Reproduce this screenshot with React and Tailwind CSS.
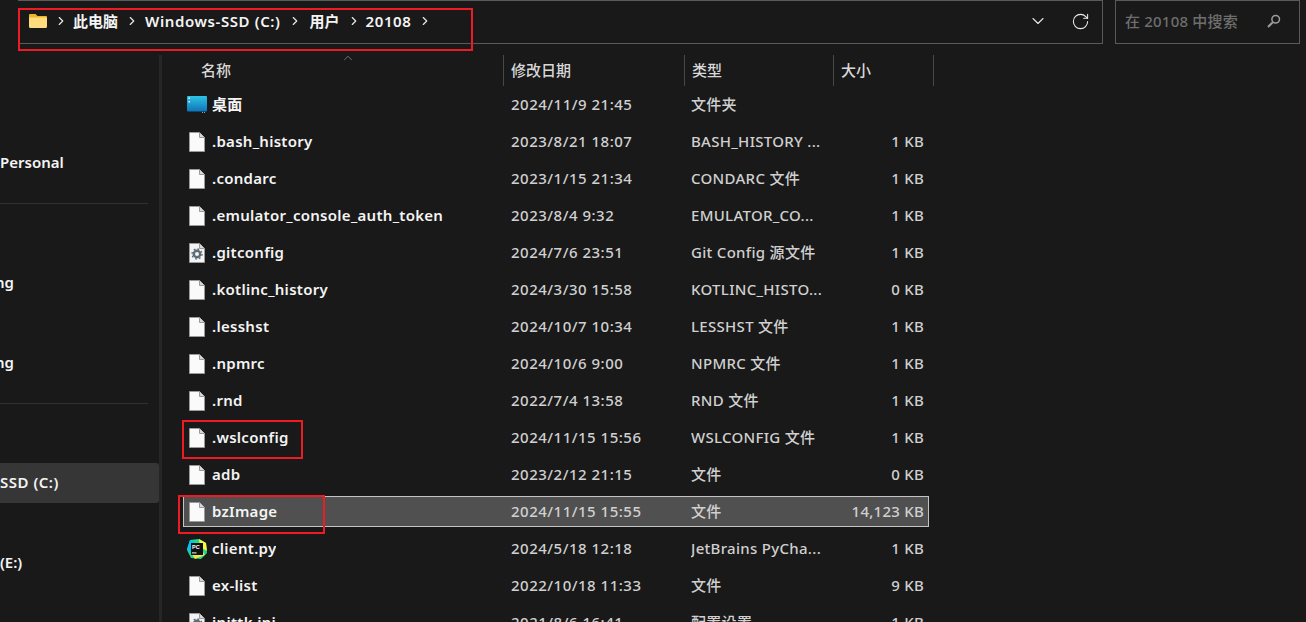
import React from "react";
import { ChevronRight, ChevronDown, ChevronUp, RotateCw } from "lucide-react";

const font = "font-['Noto_Sans','Noto_Sans_CJK_SC',sans-serif]";

const files = [
  { name: "桌面", date: "2024/11/9 21:45", type: "文件夹", size: "", icon: "desktop" },
  { name: ".bash_history", date: "2023/8/21 18:07", type: "BASH_HISTORY ...", size: "1 KB" },
  { name: ".condarc", date: "2023/1/15 21:34", type: "CONDARC 文件", size: "1 KB" },
  { name: ".emulator_console_auth_token", date: "2023/8/4 9:32", type: "EMULATOR_CO...", size: "1 KB" },
  { name: ".gitconfig", date: "2024/7/6 23:51", type: "Git Config 源文件", size: "1 KB", icon: "config" },
  { name: ".kotlinc_history", date: "2024/3/30 15:58", type: "KOTLINC_HISTO...", size: "0 KB" },
  { name: ".lesshst", date: "2024/10/7 10:34", type: "LESSHST 文件", size: "1 KB" },
  { name: ".npmrc", date: "2024/10/6 9:00", type: "NPMRC 文件", size: "1 KB" },
  { name: ".rnd", date: "2022/7/4 13:58", type: "RND 文件", size: "1 KB" },
  { name: ".wslconfig", date: "2024/11/15 15:56", type: "WSLCONFIG 文件", size: "1 KB" },
  { name: "adb", date: "2023/2/12 21:15", type: "文件", size: "0 KB" },
  { name: "bzImage", date: "2024/11/15 15:55", type: "文件", size: "14,123 KB", selected: true },
  { name: "client.py", date: "2024/5/18 12:18", type: "JetBrains PyCha...", size: "1 KB", icon: "pycharm" },
  { name: "ex-list", date: "2022/10/18 11:33", type: "文件", size: "9 KB" },
  { name: "inittk.ini", date: "2021/8/6 16:41", type: "配置设置", size: "1 KB", icon: "config" },
];

function FileIcon() {
  return (
    <svg width="16" height="20" viewBox="0 0 16 20">
      <path d="M0.5 0.5H10.5L15.5 5.5V19.5H0.5Z" fill="#fafafa" stroke="#9a9a9a" />
      <path d="M10.5 0.5V5.5H15.5" fill="#d8d8d8" stroke="#9a9a9a" />
    </svg>
  );
}

function ConfigIcon() {
  return (
    <svg width="16" height="20" viewBox="0 0 16 20">
      <path d="M0.5 0.5H10.5L15.5 5.5V19.5H0.5Z" fill="#f4f4f4" stroke="#9a9a9a" />
      <path d="M10.5 0.5V5.5H15.5" fill="#d8d8d8" stroke="#9a9a9a" />
      <circle cx="8" cy="11" r="3.2" fill="none" stroke="#5f6b75" strokeWidth="2.4" />
      <circle cx="8" cy="11" r="5" fill="none" stroke="#5f6b75" strokeWidth="1.4" strokeDasharray="1.8 2.1" />
    </svg>
  );
}

function DesktopIcon() {
  return (
    <svg width="20" height="17" viewBox="0 0 20 17">
      <defs>
        <linearGradient id="desk" x1="0" y1="0" x2="0" y2="1">
          <stop offset="0" stopColor="#2cc4e4" />
          <stop offset="1" stopColor="#0f73b8" />
        </linearGradient>
      </defs>
      <rect x="0" y="0" width="20" height="15.5" rx="1" fill="url(#desk)" />
      <rect x="1.5" y="1.5" width="1.5" height="1.5" fill="#e8f8ff" />
      <rect x="1.5" y="5" width="1.5" height="1.5" fill="#e8f8ff" />
      <rect x="15" y="16" width="1" height="1" fill="#8ab" />
      <rect x="17" y="16" width="1" height="1" fill="#8ab" />
    </svg>
  );
}

function PycharmIcon() {
  return (
    <svg width="20" height="20" viewBox="0 0 20 20">
      <path d="M3 1L12 0L19 4L20 14L14 20L4 19L0 11Z" fill="#21d789" />
      <path d="M12 0L19 4L20 12L13 8Z" fill="#fcf84a" />
      <path d="M8 20L18 16L14 10L4 14Z" fill="#f5e642" />
      <path d="M0 10L3 1L8 3L4 14Z" fill="#07c3f2" />
      <rect x="4" y="4" width="12" height="12" fill="#111" />
      <text x="5" y="9.6" fontSize="5.5" fontWeight="700" fill="#fff" fontFamily="Liberation Sans">PC</text>
      <rect x="5" y="13.4" width="4.5" height="1" fill="#fff" />
    </svg>
  );
}

function FolderIcon() {
  return (
    <svg width="18" height="14" viewBox="0 0 18 14">
      <path d="M0 1.2C0 .5.5 0 1.2 0H6.5L8.5 2H16.8C17.5 2 18 2.5 18 3.2V4H0Z" fill="#f0b429" />
      <path d="M0 3.4H18V12.8C18 13.5 17.5 14 16.8 14H1.2C.5 14 0 13.5 0 12.8Z" fill="#ffdc7d" />
    </svg>
  );
}

function SearchIcon() {
  return (
    <svg width="14" height="14" viewBox="0 0 14 14" fill="none" stroke="#9c9c9c">
      <circle cx="8.7" cy="5.3" r="3.8" strokeWidth="1.5" />
      <path d="M5.8 8.2L1 13" strokeWidth="2" />
    </svg>
  );
}

function RowIcon({ icon }) {
  if (icon === "desktop") return <DesktopIcon />;
  if (icon === "config") return <ConfigIcon />;
  if (icon === "pycharm") return <PycharmIcon />;
  return <FileIcon />;
}

function Crumb({ children, className = "" }) {
  return (
    <>
      <span className={`text-[15px] font-semibold text-[#f4f4f4] ${className}`}>{children}</span>
      <ChevronRight size={14} strokeWidth={2} className="ml-[7px] mr-[6px] text-[#e8e8e8]" />
    </>
  );
}

function Sidebar() {
  return (
    <div className="relative flex h-full w-[159px] shrink-0 flex-col overflow-hidden pt-[143px] text-[15px] font-semibold text-[#f4f4f4]">
      <div className="flex h-10 items-center pb-[2px]">Personal</div>
      <div className="mt-5 h-px w-[148px] bg-[#303030]" />
      <div className="mt-[59px] flex h-10 items-center justify-start pb-[2px]">
        <span className="-ml-[5px]">ng</span>
      </div>
      <div className="mt-10 flex h-10 items-center pb-[2px]">
        <span className="-ml-[5px]">ng</span>
      </div>
      <div className="mt-5 h-px w-[148px] bg-[#303030]" />
      <div className="mt-[59px] flex h-10 items-center rounded-r-[3px] bg-[#363636] pb-[2px] tracking-[0.5px]">SSD (C:)</div>
      <div className="mt-10 flex h-10 items-center pb-[2px]">(E:)</div>
    </div>
  );
}

function FileRow({ file }) {
  const rowClass = file.selected
    ? "border border-[#c4c4c4] bg-[#505050]"
    : "border border-transparent";
  return (
    <div className={`flex h-[31px] shrink-0 items-center text-[15px] font-semibold ${rowClass}`}>
      <div className="flex w-[327px] shrink-0 items-center">
        <div className="flex w-[28px] shrink-0 justify-center pr-[2px]">
          <RowIcon icon={file.icon} />
        </div>
        <span className="truncate tracking-[0.28px] text-[#f4f4f4]">{file.name}</span>
      </div>
      <span className="w-[180px] shrink-0 font-medium tracking-[0.5px] text-[#d0d0d0]">{file.date}</span>
      <span className="w-[142px] shrink-0 truncate font-medium tracking-[0.3px] text-[#d0d0d0]">{file.type}</span>
      <span className="flex-1 pr-[4px] text-right font-medium tracking-[0.25px] text-[#d0d0d0]">{file.size}</span>
    </div>
  );
}

function FileList() {
  return (
    <div className="flex h-full flex-1 flex-col overflow-hidden border-l-[3px] border-[#262626] pl-[21px]">
      <div className="relative flex h-[31px] w-[771px] shrink-0 items-center text-[15px] font-medium text-[#d8d8d8]">
        <div className="flex h-full w-[321px] shrink-0 items-center justify-between border-r border-[#484848] pl-[18px]">
          <span>名称</span>
          <ChevronUp size={14} strokeWidth={1} className="absolute left-[158px] -top-[4px] text-[#aaaaaa]" />
        </div>
        <div className="flex h-full w-[181px] shrink-0 items-center border-r border-[#484848] pl-[7px]">修改日期</div>
        <div className="flex h-full w-[149px] shrink-0 items-center border-r border-[#484848] pl-[7px]">类型</div>
        <div className="flex h-full w-[100px] shrink-0 items-center border-r border-[#484848] pl-[7px]">大小</div>
      </div>
      <div className="mt-[3px] flex w-[746px] flex-col gap-[6px]">
        {files.map((file) => (
          <FileRow key={file.name} file={file} />
        ))}
      </div>
    </div>
  );
}

export default function App() {
  return (
    <div className={`relative flex h-[622px] w-[1306px] flex-col overflow-hidden bg-[#191919] ${font}`}>
      <div className="flex h-[44px] shrink-0 pl-[18px] pr-[6px]">
        <div className="flex h-full w-[1085px] items-center border-r border-b border-t border-[#5a5a5a] pb-[2px] pl-[11px]">
          <FolderIcon />
          <ChevronRight size={14} strokeWidth={2} className="ml-[7px] mr-[5px] text-[#e8e8e8]" />
          <Crumb>此电脑</Crumb>
          <Crumb className="tracking-[0.6px]">Windows-SSD (C:)</Crumb>
          <Crumb className="ml-[2px]">用户</Crumb>
          <Crumb className="-ml-[1px] tracking-[0.6px]">20108</Crumb>
          <div className="ml-auto flex items-center">
            <ChevronDown size={20} strokeWidth={1.3} className="mr-[23px] text-[#e6e6e6]" />
            <RotateCw size={19} strokeWidth={1.3} className="mr-[12px] text-[#eeeeee]" />
          </div>
        </div>
        <div className="ml-[12px] flex h-full flex-1 items-center justify-between border border-[#5a5a5a] pb-[2px] pl-[9px] pr-[18px] text-[15px] font-medium tracking-[0.2px] text-[#6e6e6e]">
          <span>在 20108 中搜索</span>
          <SearchIcon />
        </div>
      </div>
      <div className="flex min-h-0 flex-1 pt-[11px]">
        <div className="-mt-[55px] h-[622px]">
          <Sidebar />
        </div>
        <FileList />
      </div>

      {/* red annotation boxes drawn over the screenshot */}
      <div className="absolute left-[18px] top-[8px] h-[43px] w-[455px] border-2 border-[#ed1c24]" />
      <div className="absolute left-[182px] top-[420px] h-[39px] w-[121px] border-2 border-[#ed1c24]" />
      <div className="absolute left-[178px] top-[495px] h-[39px] w-[147px] border-2 border-[#ed1c24]" />
    </div>
  );
}
